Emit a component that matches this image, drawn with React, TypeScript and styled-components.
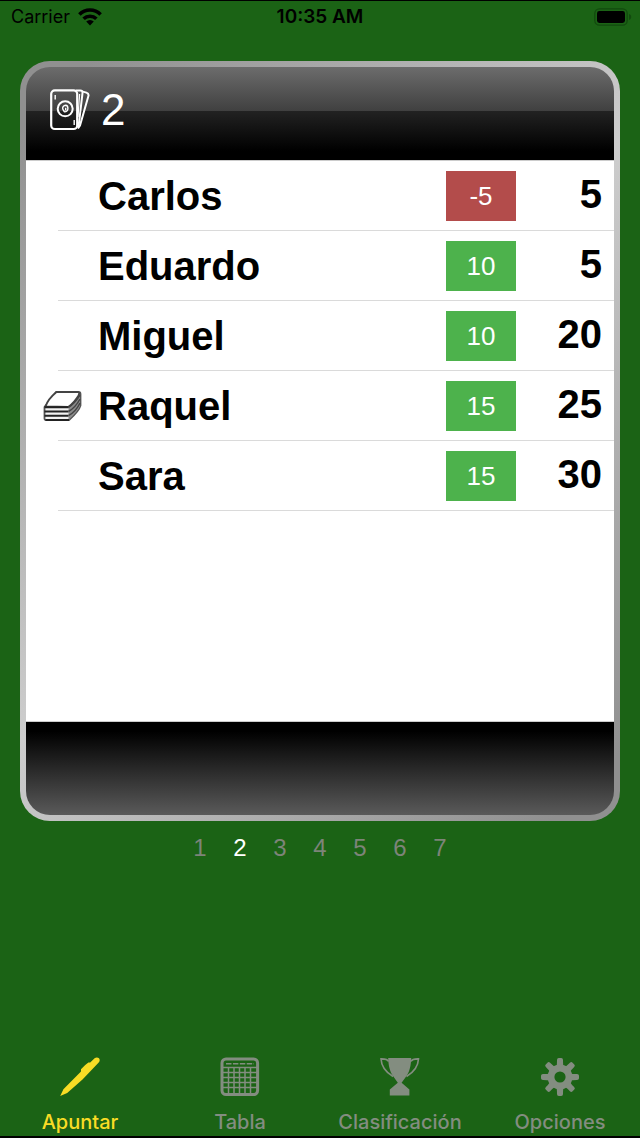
import React from "react";
import styled, { createGlobalStyle } from "styled-components";

const GlobalStyle = createGlobalStyle`
  * { box-sizing: border-box; }
  body { margin: 0; background: #1b6315; }
  button { font: inherit; color: inherit; background: none; border: 0; padding: 0; cursor: pointer; }
`;

const Screen = styled.div`
  display: flex;
  flex-direction: column;
  min-height: 100vh;
  background: #1b6315;
  border-top: 1px solid #000;
  border-bottom: 2px solid #000;
  font-family: "Liberation Sans", Arial, sans-serif;
`;

const StatusBar = styled.header`
  display: grid;
  grid-template-columns: 1fr auto 1fr;
  align-items: center;
  height: 32px;
  padding: 0 8px;
  color: #000;
  font: 400 18px/32px Inter, sans-serif;
`;

const Carrier = styled.div`
  display: flex;
  align-items: center;
  gap: 8px;
  padding-left: 3px;
`;

const Clock = styled.time`
  font-size: 19px;
  font-weight: 600;
`;

const Battery = styled.div`
  display: flex;
  justify-content: flex-end;
`;

const Card = styled.main`
  flex: 1;
  display: flex;
  flex-direction: column;
  margin: 28px 20px 0;
  padding: 6px;
  border-radius: 30px;
  background: linear-gradient(135deg, #909090 5%, #cdcdcd 50%, #909090 95%);
`;

const CardHeader = styled.div`
  display: flex;
  align-items: center;
  gap: 11px;
  height: 93px;
  padding: 0 24px 8px;
  border-radius: 24px 24px 0 0;
  color: #fff;
  background: linear-gradient(#6c6c6c 0, #404040 44px, #222 44px, #000 84px);
`;

const Round = styled.h1`
  margin: 0;
  font-size: 44px;
  line-height: 48px;
  font-weight: 400;
`;

const CardBody = styled.div`
  flex: 1;
  background: #fff;
  border-top: 1px solid #ccc;
  border-bottom: 1px solid #ccc;
`;

const CardFooter = styled.div`
  height: 93px;
  border-radius: 0 0 24px 24px;
  background: linear-gradient(#000 10%, #5a5a5a);
`;

const Scores = styled.table`
  width: 100%;
  border-collapse: collapse;
  color: #000;
`;

const Row = styled.tr`
  height: 70px;
  background: linear-gradient(#dadada, #dadada) 32px 100% / 100% 1px no-repeat;
`;

const DealerCell = styled.td`
  width: 72px;
  padding: 0 0 0 16px;

  svg { display: block; }
`;

const Name = styled.th`
  padding: 0;
  text-align: left;
  font-size: 40px;
  line-height: 48px;
`;

const DeltaCell = styled.td`
  width: 70px;
  padding: 0;
`;

const Delta = styled.button<{ $negative: boolean }>`
  && {
    display: block;
    width: 70px;
    height: 50px;
    color: #fff;
    background: ${(p) => (p.$negative ? "#b34c4b" : "#4db24c")};
    font-size: 26px;
    line-height: 50px;
  }
`;

const Total = styled.td`
  width: 98px;
  padding: 0 12px 4px 0;
  text-align: right;
  font-size: 40px;
  line-height: 48px;
  font-weight: 700;
`;

const Pager = styled.nav`
  display: flex;
  justify-content: center;
  height: 54px;
`;

const PageButton = styled.button<{ $current: boolean }>`
  && {
    width: 40px;
    color: ${(p) => (p.$current ? "#fff" : "#7d8479")};
    font-size: 24px;
    line-height: 54px;
  }
`;

const TabBar = styled.nav`
  display: flex;
  margin-top: 162px;
  height: 99px;
`;

const Tab = styled.button<{ $active: boolean }>`
  && {
    flex: 1;
    display: flex;
    flex-direction: column;
    align-items: center;
    gap: 12px;
    padding-top: 20px;
    color: ${(p) => (p.$active ? "#f8dc25" : "#838d80")};
    font: 500 20px/26px Inter, sans-serif;
  }
`;

const WifiIcon = () => (
  <svg width="24" height="18" viewBox="0 0 24 18" fill="none" stroke="#000" strokeWidth="3.6" aria-hidden="true">
    <path d="M1.400 6.400a15 15 0 0 1 21.200 0" />
    <path d="M5.600 10.800a9.200 9.200 0 0 1 12.800 0" />
    <path d="M12 17.400l-3.800-3.800a5.400 5.400 0 0 1 7.600 0z" fill="#000" stroke="none" />
  </svg>
);

const BatteryIcon = () => (
  <svg width="38" height="18" viewBox="0 0 38 18" aria-hidden="true">
    <rect x="0.8" y="0.8" width="32.4" height="16.4" rx="4.6" fill="none" stroke="#124a0e" strokeWidth="1.3" />
    <rect x="3" y="3" width="28" height="12" rx="2.4" fill="#000" />
    <path d="M35 6v6c1.400-.4 2.200-1.600 2.200-3s-.8-2.600-2.200-3z" fill="#124a0e" />
  </svg>
);

const CardsIcon = () => (
  <svg width="40" height="42" viewBox="0 0 40 42" fill="none" stroke="#fff" strokeWidth="2.2" strokeLinejoin="round" aria-hidden="true">
    <rect x="1.200" y="1.400" width="26" height="38.600" rx="3.600" />
    <circle cx="15.200" cy="19.800" r="7.500" strokeWidth="2" />
    <path d="M15.700 16.300c-2.200.2-3.300 1.700-3 3.400.2 1.300 1.300 2 1.700 3.200 1.900.2 3.500-1.300 3.500-3.400 0-1.700-.7-3.100-2.200-3.200z" strokeWidth="1.400" />
    <path d="M15.700 18.800v2.600M5.200 6v4.500M24.200 31v5" strokeWidth="1.400" />
    <path d="M26 1.400h4.300c1.700 0 2.400 1 2.200 2.800L28.500 38" strokeWidth="2" />
    <path d="M32 2.400l4.400 1.200c1.800.6 2.500 1.700 2 3.500L30 36.500 28 39.500" strokeWidth="2" />
    <path d="M29.600 5 28 28" strokeWidth="1.200" />
  </svg>
);

const DeckIcon = () => (
  <svg width="40" height="32" viewBox="0 0 40 32" role="img" aria-label="Reparte">
    <path d="M2.500 17 14 2H36.500Q38.500 2 38.500 4V15.500Q37 21 27 30H4Q2.500 30 2.500 28.500z" fill="#f2f2f2" stroke="#555" strokeWidth="1.800" strokeLinejoin="round" />
    <path d="M26.500 16.500 38 3V16Q36 21 26.500 30z" fill="#8c8c8c" />
    <path d="M3.500 16.500Q6 9 14.500 2H36Q38 2.500 36.500 5.500 32 13 26.500 16.800z" fill="#fff" stroke="#444" strokeWidth="1.800" strokeLinejoin="round" />
    <path d="M2.500 17.300H26.500M2.500 21.500H26.500M2.500 25.700H26.500M3.500 30H27" stroke="#222" strokeWidth="2" />
    <path d="M26.500 17.300Q33 13 38 5M26.500 21.500Q33.500 17.500 38 9M26.500 25.700Q34 21.500 38 13" fill="none" stroke="#444" strokeWidth="1.500" />
  </svg>
);

const PenIcon = () => (
  <svg width="40" height="40" viewBox="0 0 40 40" fill="currentColor" aria-hidden="true">
    <path d="M.2 39 3.400 32.200 21 14.400 21 12.300Q24.800 8 28.400 5.600L30.200 5.600 34.600 1.200C36 0 38 .2 39 1.300s1 3-.3 4.300L22.500 22.400 7.200 36z" />
  </svg>
);

const GridIcon = () => (
  <svg width="40" height="40" viewBox="0 0 40 40" fill="none" stroke="currentColor" aria-hidden="true">
    <rect x="2" y="2" width="35.600" height="35.600" rx="4" strokeWidth="3" />
    <path d="M6 6.800h28" strokeWidth="1.400" strokeDasharray="5.500 1.400" />
    <path d="M3 10.500h34M3 15.500h34M3 20.500h34M3 25.500h34M3 30.500h34M8.500 10.500V37M14 10.500V37M19.500 10.500V37M25 10.500V37M30.500 10.500V37" strokeWidth="1.500" />
  </svg>
);

const TrophyIcon = () => (
  <svg width="40" height="40" viewBox="0 0 40 40" aria-hidden="true">
    <path d="M8.200 1H31.200C31 9 29.500 14.500 26.500 19L21.600 25.800 29.400 32.600V38.500H9.800V32.600L17.800 25.800 13 19C10 14.500 8.400 9 8.200 1z" fill="currentColor" />
    <path d="M8.500 4.500C7.500 2 5 1.800 1 1.900 1.300 8 4.500 14.500 13 19.500M31 4.500C32 2 34.500 1.800 38.500 1.900 38.200 8 35 14.500 26.500 19.500" fill="none" stroke="currentColor" strokeWidth="1.600" />
  </svg>
);

const GearIcon = () => (
  <svg width="40" height="40" viewBox="0 0 40 40" aria-hidden="true">
    <circle cx="20" cy="20" r="9" fill="none" stroke="currentColor" strokeWidth="6.800" />
    {[0, 45, 90, 135, 180, 225, 270, 315].map((angle) => (
      <path
        key={angle}
        d="M16.400 9.500Q17 8 17 3Q17 1 18.800 1H21.200Q23 1 23 3Q23 8 23.600 9.500z"
        fill="currentColor"
        transform={`rotate(${angle} 20 20)`}
      />
    ))}
  </svg>
);

const players = [
  { name: "Carlos", delta: -5, total: 5, dealer: false },
  { name: "Eduardo", delta: 10, total: 5, dealer: false },
  { name: "Miguel", delta: 10, total: 20, dealer: false },
  { name: "Raquel", delta: 15, total: 25, dealer: true },
  { name: "Sara", delta: 15, total: 30, dealer: false },
];

const rounds = [1, 2, 3, 4, 5, 6, 7];
const currentRound = 2;

const tabs = [
  { label: "Apuntar", Icon: PenIcon },
  { label: "Tabla", Icon: GridIcon },
  { label: "Clasificación", Icon: TrophyIcon },
  { label: "Opciones", Icon: GearIcon },
];

export default function App() {
  return (
    <Screen>
      <GlobalStyle />
      <StatusBar>
        <Carrier>
          Carrier
          <WifiIcon />
        </Carrier>
        <Clock>10:35 AM</Clock>
        <Battery>
          <BatteryIcon />
        </Battery>
      </StatusBar>
      <Card>
        <CardHeader>
          <CardsIcon />
          <Round>{currentRound}</Round>
        </CardHeader>
        <CardBody>
          <Scores>
            <tbody>
              {players.map((p) => (
                <Row key={p.name}>
                  <DealerCell>{p.dealer && <DeckIcon />}</DealerCell>
                  <Name scope="row">{p.name}</Name>
                  <DeltaCell>
                    <Delta type="button" $negative={p.delta < 0}>
                      {p.delta}
                    </Delta>
                  </DeltaCell>
                  <Total>{p.total}</Total>
                </Row>
              ))}
            </tbody>
          </Scores>
        </CardBody>
        <CardFooter />
      </Card>
      <Pager>
        {rounds.map((n) => (
          <PageButton key={n} type="button" $current={n === currentRound}>
            {n}
          </PageButton>
        ))}
      </Pager>
      <TabBar>
        {tabs.map(({ label, Icon }, i) => (
          <Tab key={label} type="button" $active={i === 0}>
            <Icon />
            {label}
          </Tab>
        ))}
      </TabBar>
    </Screen>
  );
}
